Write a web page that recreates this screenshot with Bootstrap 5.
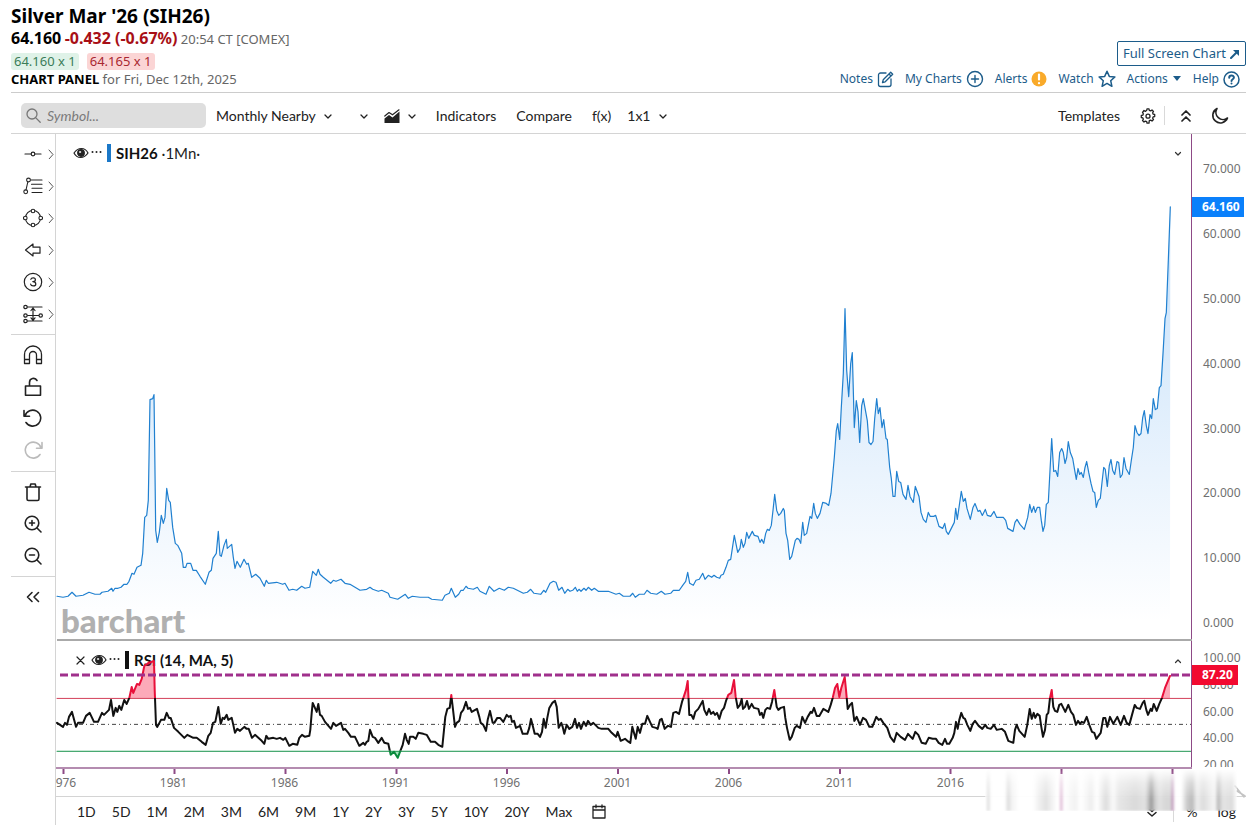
<!DOCTYPE html>
<html lang="en">
<head>
<meta charset="utf-8">
<meta name="viewport" content="width=device-width, initial-scale=1">
<title>Silver Mar '26 (SIH26)</title>
<link href="https://cdn.jsdelivr.net/npm/bootstrap@5.3.0/dist/css/bootstrap.min.css" rel="stylesheet">
<style>
  :root { --link: #1c5c8a; --rule: #d4d4d4; --axis: #8d4a86; --ui: Lato, "Liberation Sans", sans-serif; --doc: "Noto Sans", "Liberation Sans", sans-serif; }
  body { font-family: var(--doc); font-size: 13px; line-height: 18px; color: #666; background: #fff; }
  .page-frame { min-height: 100vh; padding: 0 9px 0 11px; }
  svg { display: block; flex: none; fill: none; stroke: currentColor; stroke-linecap: round; stroke-linejoin: round; }
  .quote-head { padding: 4px 0; border-bottom: 1px solid #ccc; }
  .quote-head h1 { font-size: 19px; line-height: 24px; color: #000; }
  .quote-price { line-height: 20px; }
  .quote-price strong { font-size: 16px; }
  .drop { color: #a80f16; }
  .pill { line-height: 17px; padding: 0 3px; border-radius: 3px; }
  .pill-bid { background: #dff2e8; color: #3a7d58; }
  .pill-ask { background: #fbd5d5; color: #a92730; }
  .btn-full { font-size: 13px; line-height: 19px; padding: 2px 5px; border: 1px solid var(--link); border-radius: 2px; color: var(--link); background: #fff; }
  .quote-links { font-size: 12px; padding-right: 6px; gap: 11px; }
  .quote-links a { color: var(--link); text-decoration: none; gap: 4px; }
  .toolbar { height: 41px; border-bottom: 1px solid var(--rule); font-family: var(--ui); padding: 5px 17px 0 10px; }
  .search-box { width: 185px; height: 25px; background: #dedede; border-radius: 5px; padding: 0 5px; color: #777; margin-right: 10px; gap: 6px; }
  .search-box input { font: italic 14px/20px var(--ui); background: none; border: 0; outline: 0; min-width: 0; width: 100%; padding: 0; color: #333; }
  .search-box input::placeholder { color: #7a7a7a; opacity: 1; }
  .tool { font: 14px/20px var(--ui); color: #222; background: none; border: 0; padding: 0; display: flex; align-items: center; }
  .toolbox { width: 45px; border-right: 1px solid var(--rule); color: #222; padding-top: 4px; }
  .toolbox .group { border-bottom: 1px solid var(--rule); padding-bottom: 4px; margin-bottom: 4px; }
  .toolbox .group:last-child { border: 0; }
  .toolbox button { height: 32px; width: 100%; border: 0; background: none; padding: 0 1px 0 12px; color: inherit; display: flex; align-items: center; justify-content: space-between; }
  .toolbox button:disabled { color: #bbb; }
  .pane { position: relative; min-height: 0; display: flex; }
  .pane-price { flex: 506 1 0; }
  .pane-rsi { flex: 126 1 0; margin-top: 2px; }
  .pane-rsi::before { content: ""; position: absolute; top: -2px; left: 1px; right: 54px; height: 2px; background: #aaa; }
  .plot { position: relative; flex: 1; min-width: 0; }
  .plot > svg { position: absolute; inset: 0; width: 100%; height: 100%; }
  .plot > svg * { vector-effect: non-scaling-stroke; }
  .scale { width: 55px; border-left: 1px solid var(--axis); font-size: 12px; line-height: 18px; color: #707070; position: relative; overflow: hidden; }
  .scale ol { list-style: none; margin: 0; padding: 26px 0 7px 11px; height: 100%; display: flex; flex-direction: column; justify-content: space-between; }
  .pane-rsi .scale ol { padding: 8px 0 0 11px; height: calc(100% + 7px); }
  .tag { position: absolute; left: 0; color: #fff; font-weight: 700; line-height: 20px; padding-left: 10px; }
  .tag-price { width: 52px; background: #0a80fb; }
  .tag-rsi { width: 46px; background: #f20a30; }
  .legend { position: absolute; left: 17px; top: 9px; font: 15px/20px var(--ui); color: #222; display: flex; align-items: center; }
  .legend b { font-weight: 700; color: #111; }
  .legend i { width: 4px; height: 18px; margin: 0 5px; background: #1b78c8; }
  .legend .dots { margin-left: 2px; }
  .pane-rsi .legend { left: 20px; }
  .pane-rsi .legend .eye { margin-left: 6px; }
  .pane-rsi .legend i { background: #111; }
  .fold { position: absolute; right: 9px; top: 17px; border: 0; background: none; padding: 0; color: #333; }
  .wordmark { position: absolute; left: 5px; bottom: 1px; font: 900 33px/36px var(--ui); color: #b0b0b0; }
  .timeline { position: relative; border-top: 2px solid #b48cb0; height: 29px; width: calc(100% - 54px); overflow: hidden; font-size: 12px; color: #707070; }
  .timeline ol { list-style: none; display: flex; margin: 0 0 0 -49px; padding: 5px 0 0; }
  .timeline li { flex: 0 0 111px; text-align: center; }
  .timeline svg { position: absolute; top: 0; left: 0; width: 100%; height: 5px; color: var(--axis); }
  .ranges { border-top: 1px solid var(--rule); height: 29px; padding: 1px 10px 0 21px; }
  .ranges .tool-row { gap: 16px; }
  .smear { position: absolute; right: 9px; bottom: 14px; width: 252px; height: 42px; z-index: 2; pointer-events: none; filter: blur(1px);
    background: linear-gradient(90deg, #fff 0 1px, #ddd 3px, #fff 6px 20px, #ddd 23px, #f4f4f4 27px, #fff 34px 48px, #f0f0f0 54px, #e2e2e2 61px, #f2f2f2 67px, #fff 72px 74px, #ddb9d4 76px, #fff 79px, #f2f2f2 90px, #fff 96px, #eee 106px, #fff 112px, #ddd 121px, #fafafa 128px, #e6e6e6 134px, #dadada 150px, #e2e2e2 160px, #bbb 164px, #999 166px, #ccc 170px, #e2e2e2 174px, #d8d8d8 180px, #d6d6d6 186px, #b98ab2 187px, #fff 190px 196px, #ccc 202px, #bbb 207px, #eee 212px, #ddd 218px, #eee 226px, #f5f5f5 230px, #bbb 233px, #e4e4e4 238px, #ddd 247px, #fff 252px);
    -webkit-mask-image: linear-gradient(transparent, rgba(0,0,0,.6) 14px, #000 30px); mask-image: linear-gradient(transparent, rgba(0,0,0,.6) 14px, #000 30px); }
  .smear-arrow { position: absolute; right: 0; bottom: 26px; color: #c4c4c4; }
</style>
</head>
<body>
<svg width="0" height="0" class="position-absolute" aria-hidden="true">
  <defs>
    <g id="chev"><path d="M1 2l3 3 3-3" stroke-width="1.3"/></g>
    <g id="more"><path d="M1 1l4 4.500-4 4.500" stroke="#555" stroke-width="1"/></g>
    <g id="eye" stroke-width="1.200"><path d="M1 6c4-6 11-6 14 0c-4 6-11 6-14 0z"/><circle cx="8" cy="6" r="3.300" fill="#222"/><circle cx="7" cy="5" r=".7" fill="#fff" stroke="#fff" stroke-width=".5"/></g>
    <g id="dots" fill="#222" stroke="none"><circle cx="1.500" cy="1" r="1"/><circle cx="5.500" cy="1" r="1"/><circle cx="9.500" cy="1" r="1"/></g>
  </defs>
</svg>
<div class="page-frame d-flex flex-column">
  <header class="quote-head d-flex justify-content-between align-items-end">
    <div>
      <h1 class="fw-bold m-0">Silver Mar '26 (SIH26)</h1>
      <div class="quote-price"><strong class="text-black">64.160</strong> <strong class="drop">-0.432 (-0.67%)</strong> <span>20:54 CT [COMEX]</span></div>
      <div class="d-flex gap-2 pt-1"><span class="pill pill-bid">64.160 x 1</span><span class="pill pill-ask">64.165 x 1</span></div>
      <div><strong class="text-black">CHART PANEL</strong> for Fri, Dec 12th, 2025</div>
    </div>
    <div class="d-flex flex-column align-items-end gap-1">
      <button class="btn-full d-flex align-items-center gap-1" type="button">Full Screen Chart <svg width="10" height="10" viewBox="0 0 10 10" stroke-width="2" stroke-linecap="butt"><path d="M1 9l6-6"/><path d="M3 1h6v6z" fill="currentColor" stroke="none"/></svg></button>
      <nav class="quote-links d-flex align-items-center">
        <a href="#" class="d-flex align-items-center">Notes <svg width="17" height="17" viewBox="0 0 17 17" stroke-width="1.300"><path d="M9 2H3.500a2 2 0 0 0-2 2v9.500a2 2 0 0 0 2 2H12a2 2 0 0 0 2-2V8M5.500 11.500l.7-2.700L13.700 1.300l2 2L8.200 10.800zM12 3l2 2"/></svg></a>
        <a href="#" class="d-flex align-items-center">My Charts <svg width="18" height="18" viewBox="0 0 18 18" stroke-width="1.400"><circle cx="9" cy="9" r="7.500"/><path d="M9 5.500v7M5.500 9h7"/></svg></a>
        <a href="#" class="d-flex align-items-center">Alerts <svg width="16" height="16" viewBox="0 0 16 16"><circle cx="8" cy="8" r="7.500" fill="#f9aa2a" stroke="none"/><path d="M8 3.500v5M8 12v.2" stroke="#fff" stroke-width="2.200"/></svg></a>
        <a href="#" class="d-flex align-items-center">Watch <svg width="18" height="18" viewBox="0 0 18 18" stroke-width="1.500"><path d="M9 1.200l2.300 5.200 5.600.5-4.200 3.800 1.200 5.600L9 13.400l-4.900 2.900 1.200-5.600L1.100 6.900l5.600-.5z"/></svg></a>
        <a href="#" class="d-flex align-items-center">Actions <svg width="10" height="6" viewBox="0 0 10 6"><path d="M1 0h8L5 5z" fill="currentColor" stroke="none"/></svg></a>
        <a href="#" class="d-flex align-items-center">Help <svg width="17" height="17" viewBox="0 0 17 17" stroke-width="1.500"><circle cx="8.500" cy="8.500" r="7.500"/><path d="M6.200 6.800c0-3 4.700-3 4.700-.2 0 1.800-2.400 1.600-2.400 3.500M8.500 12.500v.1" stroke-width="2"/></svg></a>
      </nav>
    </div>
  </header>

  <div class="toolbar d-flex align-items-center" role="toolbar">
    <label class="search-box d-flex align-items-center mb-0"><svg width="15" height="15" viewBox="0 0 15 15" stroke-width="1.300"><circle cx="6" cy="6" r="5"/><path d="M9.600 9.600l4.600 4.600"/></svg><input type="text" placeholder="Symbol..." aria-label="Symbol"></label>
    <button class="tool gap-2" type="button">Monthly Nearby <svg width="8" height="6"><use href="#chev"/></svg></button>
    <button class="tool ps-4 ms-1" type="button" aria-label="Template"><svg width="8" height="6"><use href="#chev"/></svg></button>
    <button class="tool gap-2 ms-3" type="button" aria-label="Chart type"><svg width="16" height="14" viewBox="0 0 16 14"><path d="M.5 14V9.500L5 6l3.500 2.500 7-6V14z" fill="currentColor" stroke="none"/><path d="M.8 7L5 3.500l3.500 2.300L15 .8" stroke-width="1.200"/></svg><svg width="8" height="6"><use href="#chev"/></svg></button>
    <button class="tool ms-3 ps-1" type="button">Indicators</button>
    <button class="tool ms-3 ps-1" type="button">Compare</button>
    <button class="tool ms-3 ps-1" type="button">f(x)</button>
    <button class="tool gap-2 ms-3" type="button">1x1 <svg width="8" height="6"><use href="#chev"/></svg></button>
    <button class="tool ms-auto" type="button">Templates</button>
    <button class="tool ms-3 ps-1" type="button" aria-label="Settings"><svg width="16" height="16" viewBox="0 0 16 16" stroke-width="1.300"><path d="M6.700 2.300L7 .8h2l.3 1.500 1.400.6 1.300-.9 1.500 1.500-.9 1.300.6 1.400 1.500.3v2l-1.500.3-.6 1.400.9 1.300-1.500 1.500-1.300-.9-1.400.6L9 15.200H7l-.3-1.500-1.400-.6-1.300.9L2.500 12.500l.9-1.300-.6-1.400L1.300 9.500v-2l1.500-.3.6-1.400-.9-1.300L4 2.500l1.300.9z"/><circle cx="8" cy="8.200" r="2"/></svg></button>
    <span class="vr ms-2 my-2"></span>
    <button class="tool ms-3" type="button" aria-label="Collapse header"><svg width="10" height="12" viewBox="0 0 10 12" stroke-width="1.700"><path d="M1 5l4-4 4 4M1 11l4-4 4 4"/></svg></button>
    <button class="tool ms-3 ps-1" type="button" aria-label="Dark mode"><svg width="18" height="18" viewBox="0 0 18 18" stroke-width="1.600"><path d="M6 1.500a7.600 7.600 0 1 0 10.500 9.500A7.200 7.200 0 0 1 6 1.500z"/></svg></button>
  </div>

  <div class="d-flex flex-grow-1">
    <aside class="toolbox" aria-label="Drawing tools">
      <div class="group">
        <button type="button" aria-label="Lines"><svg width="20" height="20" viewBox="0 0 20 20" stroke-width="1.200"><path d="M2 10h6M12 10h6"/><circle cx="10" cy="10" r="1.800"/></svg><svg width="6" height="10"><use href="#more"/></svg></button>
        <button type="button" aria-label="Fibonacci"><svg width="20" height="20" viewBox="0 0 20 20" stroke-width="1.100"><path d="M8 4h11M8.500 8.300H19M9 12.300h10M9 16.500h10M3 14l1.800-8"/><circle cx="5.500" cy="4" r="1.900"/><circle cx="2.700" cy="15.800" r="1.900"/></svg><svg width="6" height="10"><use href="#more"/></svg></button>
        <button type="button" aria-label="Shapes"><svg width="20" height="20" viewBox="0 0 20 20" stroke-width="1.100"><circle cx="10" cy="10" r="7.500"/><g fill="#fff"><circle cx="10" cy="3" r="1.800"/><circle cx="10" cy="17" r="1.800"/><circle cx="2.300" cy="10" r="1.800"/><circle cx="17.700" cy="10" r="1.800"/></g></svg><svg width="6" height="10"><use href="#more"/></svg></button>
        <button type="button" aria-label="Arrows"><svg width="20" height="20" viewBox="0 0 20 20" stroke-width="1.200"><path d="M2.500 10L10 4v3.200h7v6h-7V16z"/></svg><svg width="6" height="10"><use href="#more"/></svg></button>
        <button type="button" aria-label="Elliott waves"><svg width="20" height="20" viewBox="0 0 20 20" stroke-width="1.200"><circle cx="10" cy="10" r="8.700"/><path d="M7.800 7.300c.6-2 4.600-2 4.600.4 0 1.500-1.300 1.900-2.600 1.900 1.500 0 3 .5 3 2.300 0 2.700-4.700 2.700-5.200.3"/></svg><svg width="6" height="10"><use href="#more"/></svg></button>
        <button type="button" aria-label="Measure"><svg width="20" height="20" viewBox="0 0 20 20" stroke-width="1.200"><path d="M4 3h15M4 11.500h12M4 17h15M10 5v10M8 6.500l2-2.500 2 2.500M8 13.800l2 2.500 2-2.500"/><g fill="#fff"><circle cx="2.500" cy="3" r="1.700"/><circle cx="2.500" cy="11.500" r="1.700"/><circle cx="17.700" cy="11.500" r="1.700"/><circle cx="2.500" cy="17" r="1.700"/></g></svg><svg width="6" height="10"><use href="#more"/></svg></button>
      </div>
      <div class="group">
        <button type="button" aria-label="Magnet"><svg width="20" height="20" viewBox="0 0 20 20" stroke-width="1.300"><path d="M1.500 18.500v-9a8.500 8.500 0 0 1 17 0v9h-5V10a3.500 3.500 0 0 0-7 0v8.500zM1.500 14.500h5M13.500 14.500h5"/></svg></button>
        <button type="button" aria-label="Unlock"><svg width="20" height="20" viewBox="0 0 20 20" stroke-width="1.600"><path d="M2.500 9h15v9.300h-15zM6.500 9V5.500a4 4 0 0 1 7.500-2"/></svg></button>
        <button type="button" aria-label="Undo"><svg width="20" height="20" viewBox="0 0 20 20" stroke-width="1.600"><path d="M2 7A8 8 0 1 1 3 13.500M1 1.500V7.300h5.500"/></svg></button>
        <button type="button" aria-label="Redo" disabled><svg width="20" height="20" viewBox="0 0 20 20" stroke-width="1.600"><path d="M18 7A8 8 0 1 0 17 13.500M19 1.500V7.300h-5.500"/></svg></button>
      </div>
      <div class="group">
        <button type="button" aria-label="Delete"><svg width="20" height="20" viewBox="0 0 20 20" stroke-width="1.600"><path d="M2.500 5h15M4 5v12a1.500 1.500 0 0 0 1.500 1.500h9A1.500 1.500 0 0 0 16 17V5M7 5l.8-3h4.400L13 5"/></svg></button>
        <button type="button" aria-label="Zoom in"><svg width="20" height="20" viewBox="0 0 20 20" stroke-width="1.600"><circle cx="9" cy="9" r="6.800"/><path d="M14 14l4 4M9 6.500v5M6.500 9h5"/></svg></button>
        <button type="button" aria-label="Zoom out"><svg width="20" height="20" viewBox="0 0 20 20" stroke-width="1.600"><circle cx="9" cy="9" r="6.800"/><path d="M14 14l4 4M6.500 9h5"/></svg></button>
      </div>
      <div class="group">
        <button type="button" aria-label="Collapse tools"><svg width="20" height="20" viewBox="0 0 20 20" stroke-width="1.600"><path d="M9 5.500L4.500 10 9 14.500M15.500 5.500L11 10l4.500 4.500"/></svg></button>
      </div>
    </aside>

    <main class="flex-grow-1 d-flex flex-column position-relative" style="min-width:0">
      <section class="pane pane-price">
        <div class="plot">
          <svg viewBox="56 133 1135 506" preserveAspectRatio="none" role="img" aria-label="Silver monthly price">
            <defs><linearGradient id="fade" x1="0" y1="206" x2="0" y2="623" gradientUnits="userSpaceOnUse"><stop offset="0" stop-color="#2b8ceb" stop-opacity=".28"/><stop offset="1" stop-color="#2b8ceb" stop-opacity="0"/></linearGradient></defs>
            <path id="priceArea" fill="url(#fade)" stroke="none"/>
            <path id="priceLine" stroke="#2080d0" stroke-width="1.2"/>
          </svg>
          <div class="legend"><svg class="eye" width="16" height="12"><use href="#eye"/></svg><svg width="11" height="4" class="dots"><use href="#dots"/></svg><i></i><span><b>SIH26</b> ·1Mn·</span></div>
          <button class="fold" type="button" aria-label="Pane menu"><svg width="8" height="6" viewBox="0 0 8 6"><path d="M1.500 1.500L4 4l2.500-2.500" stroke-width="1.200"/></svg></button>
          <div class="wordmark">barchart</div>
        </div>
        <div class="scale"><ol><li>70.000</li><li>60.000</li><li>50.000</li><li>40.000</li><li>30.000</li><li>20.000</li><li>10.000</li><li>0.000</li></ol><div class="tag tag-price" style="top:12.4%">64.160</div></div>
      </section>
      <section class="pane pane-rsi">
        <div class="plot">
          <div class="legend"><svg width="9" height="9" viewBox="0 0 9 9"><path d="M1 1l7 7M8 1L1 8" stroke-width="1.200"/></svg><svg class="eye" width="16" height="12"><use href="#eye"/></svg><svg width="11" height="4" class="dots"><use href="#dots"/></svg><i></i><b>RSI (14, MA, 5)</b></div>
          <svg viewBox="56 641 1135 126" preserveAspectRatio="none" role="img" aria-label="Relative strength index">
            <defs>
              <clipPath id="over"><path d="M56 641h1135v57H56z"/></clipPath>
              <clipPath id="mid"><path d="M56 698h1135v53H56z"/></clipPath>
              <clipPath id="under"><path d="M56 751h1135v20H56z"/></clipPath>
            </defs>
            <path d="M57 724.500H1191" stroke="#444" stroke-width="1" stroke-dasharray="4 3 1 3" stroke-linecap="butt"/>
            <path id="rsiHigh" fill="#f8143c" fill-opacity=".36" stroke="none" clip-path="url(#over)"/>
            <path id="rsiLow" fill="#28c060" fill-opacity=".4" stroke="none" clip-path="url(#under)"/>
            <path d="M57 698.500H1191" stroke="#d4405a" stroke-width="1"/>
            <path d="M57 751.500H1191" stroke="#219653" stroke-width="1"/>
            <path class="rsi-line" stroke="#e8103a" stroke-width="2" clip-path="url(#over)"/>
            <path class="rsi-line" stroke="#111" stroke-width="2" clip-path="url(#mid)"/>
            <path class="rsi-line" stroke="#0a8a3c" stroke-width="2" clip-path="url(#under)"/>
            <path d="M60 675H1191" stroke="#a0308c" stroke-width="3" stroke-dasharray="8 3" stroke-linecap="butt"/>
          </svg>
          <button class="fold" type="button" aria-label="Move pane up"><svg width="8" height="6" viewBox="0 0 8 6"><path d="M1.500 4.500L4 2l2.500 2.500" stroke-width="1.200"/></svg></button>
        </div>
        <div class="scale"><ol><li>100.00</li><li>80.00</li><li>60.00</li><li>40.00</li><li>20.00</li></ol><div class="tag tag-rsi" style="top:19%">87.20</div></div>
      </section>
      <div class="timeline">
        <svg viewBox="56 769 1136 5" preserveAspectRatio="none" stroke-width="2" stroke-linecap="butt"><path d="M63.500 769v5M174.500 769v5M285.500 769v5M396.500 769v5M507 769v5M618 769v5M729 769v5M840 769v5M950.500 769v5M1061.500 769v5M1172.500 769v5"/></svg>
        <ol><li>1976</li><li>1981</li><li>1986</li><li>1991</li><li>1996</li><li>2001</li><li>2006</li><li>2011</li><li>2016</li></ol>
      </div>
      <div class="ranges d-flex align-items-center justify-content-between">
        <div class="tool-row d-flex align-items-center">
          <button class="tool" type="button">1D</button><button class="tool" type="button">5D</button><button class="tool" type="button">1M</button><button class="tool" type="button">2M</button><button class="tool" type="button">3M</button><button class="tool" type="button">6M</button><button class="tool" type="button">9M</button><button class="tool" type="button">1Y</button><button class="tool" type="button">2Y</button><button class="tool" type="button">3Y</button><button class="tool" type="button">5Y</button><button class="tool" type="button">10Y</button><button class="tool" type="button">20Y</button><button class="tool" type="button">Max</button>
          <button class="tool ms-1" type="button" aria-label="Date range"><svg width="14" height="15" viewBox="0 0 14 15" stroke-width="1.300"><path d="M1 2.500h12v11.500H1zM1 6h12M4 .8v3M10 .8v3"/></svg></button>
        </div>
        <div class="d-flex align-items-center">
          <button class="tool me-3" type="button" aria-label="More"><svg width="10" height="12" viewBox="0 0 10 12" stroke-width="1.500"><path d="M1 2l4 3.500L9 2M1 6.500L5 10l4-3.500"/></svg></button>
          <span class="vr me-2"></span>
          <button class="tool ms-1 me-3" type="button">%</button>
          <button class="tool ms-1" type="button">log</button>
        </div>
      </div>
      <div class="smear"></div>
      <svg class="smear-arrow" width="12" height="14" viewBox="0 0 12 14" stroke-width="1.500"><path d="M1 1l9 11M3 6l8 5"/></svg>
    </main>
  </div>
</div>
<script src="https://cdn.jsdelivr.net/npm/bootstrap@5.3.0/dist/js/bootstrap.bundle.min.js"></script>
<script>
  // Series as x,y pairs in the units of each pane's viewBox.
  const price = `57,596 63,597 68,596 72,592 76,596 83,595 89,592 95,594 100,594 102,592 108,591 111.700,588 113,591 115,588 118,588 121,587 124,584 127,584 129,581 132,573 134,574 137,567 141,565 142.700,553 144.700,517 146.700,515 148.300,500 150,399 152.700,398 154,394 154.700,447 155.700,530 157.300,542 159.300,532 161.300,515 163.300,523 165,517 166.700,488 168.700,500 170.300,502 172.700,527 175.300,543 177.700,545 181.700,553 183.300,567 185.700,567 187,563 190.700,563 193,570 196.300,570 200,576 205.300,584 209,572 211.300,570 213,558 216.300,553 218.300,531 220,555 221.300,556 224,545 226.300,539 227.300,548 231.700,544 233.300,557 235,568 237,561 240.300,567 244,559 246.700,564 248.300,563 251.700,577 255.700,574 260,578 264.300,586 266.300,580 268.300,583 276.700,582 282.700,584 285,583 289,590 292.700,589 296.700,590 301.700,586 305,588 309.700,587 312.700,571 316.300,575 318.300,569 320,574 323.300,577 330.700,583 333.300,580 336,581 341,579 345,583 350,584 356.700,588 360,590 366.700,589 370,587 372.700,589 378.300,591 381.700,590 388.300,593 390,597 397.700,599 405.300,594 408.300,598 412.300,596 420,597 428.300,597 431.700,599 442.300,600 445,595 449.300,593 451.300,588 455.300,597 458.700,594 461,590 463.300,590 466,586 468,588 473.300,589 477.300,587 480,591 486,594 489.300,586 494,591 499.300,588 504.300,590 508.300,587 513.300,588 517.300,590 523.300,593 527.300,592 530.700,589 534,593 540.700,594 543.700,590 545.700,592 550,583 553.300,581 556,582 558.700,590 562,587 564.700,593 567.700,589 570,591 572.700,590 575.300,587 577.300,591 579,589 581,591 584,588 586,590 588.300,587 591.700,590 594.300,588 598.300,591 608.300,591 616,594 619.300,593 623.300,596 630,596 632.700,593 635.300,597 639.300,594 644.300,594 647,590 650.700,593 656.700,594 661.300,591 665,594 670.700,593 673.300,590 679.300,590 682.700,585 685.700,581 687.700,572 689.700,583 693.300,585 696,580 699.300,579 702.700,573 705,579 708.300,575 711.700,577 714,575 716.700,577 719.700,578 721,575 723.300,574 726,567 728.300,560 730.700,559 734.300,535 737.700,552 740,548 741.300,539 743.300,547 745,543 746.700,532 748.700,538 752.300,531 754.300,535 758,536 760,542 761.700,539 763.700,543 765.700,533 767.300,529 769.300,530 771.300,525 773,510 774.700,494 776.700,510 778.700,515 780.700,513 783.300,508 784.300,510 786,533 787.700,540 789.700,559 791.700,556 795.300,540 797,538 799,539 800.700,543 802.700,522 804.300,535 806.700,533 810,516 811.700,518 813.700,503 815.300,513 817.300,518 820,513 822.700,502 826.300,503 828.700,505 831,493 834.300,457 836.300,430 837.700,423 839.700,439 841.300,407 843.300,373 845,308 846.700,370 848.700,396 850.700,363 852.300,352 854.300,427 856.300,400 858,411 859.700,442 861.700,405 863.300,398 867.300,420 869,442 871,444 873,441 874.700,418 876.700,398 878.300,413 880,407 882,427 883.700,419 886,438 887.300,439 889.700,467 891.300,478 893,496 895,496 896.700,471 898.700,481 900.700,482 903,494 906,499 908,485 910,496 913.300,502 915.300,486 919,496 921,512 923.300,519 926,522 928.300,512 930.300,516 933.700,516 935.700,515 939,526 942.700,528 944.700,523 946.300,531 948.300,534 952.300,526 954.300,522 955.700,508 957.300,519 959.300,505 961.300,491 963.300,501 965.300,498 967,508 970.300,519 973,507 975,503 978,511 980,510 982.300,515 985.300,509 987.300,515 990.700,516 994,511 996.700,517 1003.300,517 1005.700,520 1007.700,528 1013,531 1015,522 1017,519 1020,524 1024.300,529 1027.700,517 1029.700,504 1031.700,512 1033.700,506 1035.300,512 1037.300,507 1039.700,507 1041.300,520 1043,531 1044.700,525 1046.300,504 1048.300,502 1050,470 1051.700,438 1053.700,471 1055.700,470 1057.700,476 1059.700,452 1061.700,448 1063.300,452 1065,463 1066.700,457 1068.300,441 1070.300,452 1072.700,458 1074.700,470 1076.300,479 1078,468 1079.700,474 1081.300,472 1083.300,477 1085,467 1086.700,461 1088.700,472 1091,483 1093,491 1094.700,492 1096.300,507 1098.300,500 1100.300,498 1102,482 1103.700,467 1105.300,469 1107.300,486 1109.300,465 1111,459 1112.700,470 1114.700,474 1117,461 1118.700,462 1120.300,477 1122.300,474 1124,457 1126,468 1129.300,474 1131.300,460 1133.300,447 1135,425 1137,432 1139,435 1141,433 1142.700,417 1144.300,410 1146.300,425 1148,433 1150,414 1151.700,418 1153.300,398 1155.300,409 1157.300,408 1159.300,387 1161,385 1163,353 1165,318 1166.300,312 1168.300,260 1170.300,206`;
  const rsi = `57,723 60,725 63,727 65,723 67,725 69,717 72,712 76,727 78,723 83,723 86,716 89.700,713 94,722 98,722 102,713 104,715 107,712 109,710 111,700 113.300,716 115.700,708 117.300,712 119.300,706 121.300,710 124.300,700 126.700,704 129.300,698 131.700,687 133.300,693 137,684 139.300,685 141.700,679 144.300,666 148.300,663 154,661 154.700,690 156,725 157.300,727 161,720 164.300,720 166.700,713 169,718 170.700,718 174,728 178.300,732 184.300,738 187.300,735 193.300,738 196.700,738 201.700,742 205.700,745 208.300,736 210.700,733 213,723 215.300,722 218.300,707 220.700,724 222.700,718 224.300,719 226.700,715 228.300,720 231.700,718 233.300,725 235,733 237.300,729 240,731 244.300,727 246.700,729 248.700,729 252,738 255,735 261.700,741 264.300,744 266.300,736 268.300,739 273.300,738 276.700,739 280,738 283.300,740 285.300,738 289.300,746 292.700,744 297.300,745 299.300,738 302,735 305,737 309.300,736 310.300,730 311.700,713 312.700,703 316.700,712 318.300,704 320,715 321.700,716 325,722 331,729 333.300,723 336,726 341,723 343.300,730 345,729 348.300,733 351,737 355,737 359.300,746 363.300,743 365,745 366.700,742 368.300,741 370,730 372.700,737 375,738 378.300,743 381.700,738 384.300,743 388.300,744 390.700,755 394,752 397.700,758 400,752 402.700,745 405,734 406.700,740 408.700,744 410,737 413.300,737 415.700,739 418.300,733 423.300,734 426.700,735 430.700,742 435,742 438.300,745 442.300,747 444,730 445.300,717 447.300,709 449.700,708 451.300,695 452.700,707 455,727 456.700,723 459.300,721 461,713 463.300,710 466,702 468,709 470,708 471.700,712 477,709 479.300,717 480.700,723 483.300,725 486,731 487.700,720 490,711 492.700,723 494.300,723 497.300,718 500,718 503.300,722 506.700,715 508.700,717 510.700,716 512,722 514,721 516,728 520,726 522.700,734 527.300,734 529.300,728 531,719 533,727 534.700,734 537.700,734 540,737 542,732 543.700,719 545.700,728 547.300,718 549.300,708 552.300,703 555,701 556.700,707 558.700,728 561.300,723 562.700,727 564.300,734 566.700,725 569.300,729 572.300,727 575,719 577,728 579,723 581,729 583.700,722 586,726 588,721 590.700,725 593.300,723 598.300,728 601.700,729 608.300,729 611.700,733 616,737 617.700,732 620.700,741 625,739 627.300,741 630.300,743 632.300,727 635.700,739 637.700,727 640,733 642.300,724 645,724 647.300,716 650,722 652.300,727 656,728 657.700,729 660,720 661.700,719 664.700,729 668,726 671,727 673.300,713 676,712 679,714 682,702 683.700,697 686,690 687.700,681 689.300,715 691.300,715 693.300,719 695.300,712 698.300,709 702.700,701 704.300,710 706.700,715 709,709 711,714 713.300,712 715,715 717,713 719.300,719 721.700,711 724,708 726,701 728.300,695 731.300,693 734,680 735.700,697 737.700,708 740,705 741.700,699 743,709 745,707 747,701 749,709 751.700,704 754,708 758.300,709 760,715 761.700,713 763.300,718 765.300,710 767.300,708 770,709 772,702 774.300,690 776.700,707 778.300,710 780.700,708 784,707 785.300,718 787,728 789.700,740 791.700,737 794.700,728 796.700,726 800,728 802.300,717 805,723 807.700,717 810.700,712 812,713 814,708 816.700,716 819.300,716 823.300,709 826.700,711 828.300,712 830.700,705 832.700,698 835,688 837.300,684 839.300,697 841.300,688 844.700,677 846,690 847.700,709 850,705 852,703 854.300,721 856.700,717 860,725 863,718 866,720 869.300,727 872.300,727 876.300,717 878.700,720 880.700,719 883.300,723 887.300,728 890.300,737 894,742 896.700,733 900.700,737 905,740 908,734 912.700,739 915.300,732 918.300,735 921.700,743 925.700,744 928.700,738 932.700,739 936,739 938.700,743 942.300,745 945,739 947,744 949.300,744 952.700,738 954.300,733 956,722 957.700,729 959.300,720 961.300,713 963.300,718 965,719 967.300,725 970.300,731 972.700,724 975,721 978.700,726 982.300,729 985.300,725 987.300,728 990.700,729 994,725 996.700,730 1001.700,729 1005,732 1008.300,741 1013.300,743 1015,730 1016.700,725 1019.300,731 1024.700,737 1027.300,725 1029.700,709 1031.700,719 1033.700,713 1035.300,718 1037.300,714 1039.700,716 1041.300,727 1043,737 1045,730 1046.700,715 1048.300,713 1050,698 1051.700,690 1053.300,707 1055,711 1057.300,712 1059.300,705 1061.300,704 1065.300,712 1068.300,705 1071,712 1073.300,715 1076,725 1078,721 1080,724 1081.700,722 1084,723 1086.700,717 1089.300,725 1092,732 1094.300,733 1096.300,739 1100.700,733 1103.300,718 1105.300,718 1107.300,727 1110,717 1113.300,724 1117.300,717 1120.700,725 1124,716 1126.700,723 1129.300,725 1132,715 1134.700,705 1136.700,708 1140,709 1142.700,703 1144.300,701 1146.300,710 1148,715 1150.700,709 1152,711 1153.700,704 1156.700,711 1159.300,704 1162,698 1165,688 1170,676`;
  const set = (el, d) => el.setAttribute('d', d);
  set(document.getElementById('priceLine'), 'M' + price);
  set(document.getElementById('priceArea'), 'M' + price + ' 1170,623 57,623z');
  document.querySelectorAll('.rsi-line').forEach(el => set(el, 'M' + rsi));
  set(document.getElementById('rsiHigh'), 'M' + rsi + ' 1170,698 57,698z');
  set(document.getElementById('rsiLow'), 'M' + rsi + ' 1170,751 57,751z');
</script>
</body>
</html>
